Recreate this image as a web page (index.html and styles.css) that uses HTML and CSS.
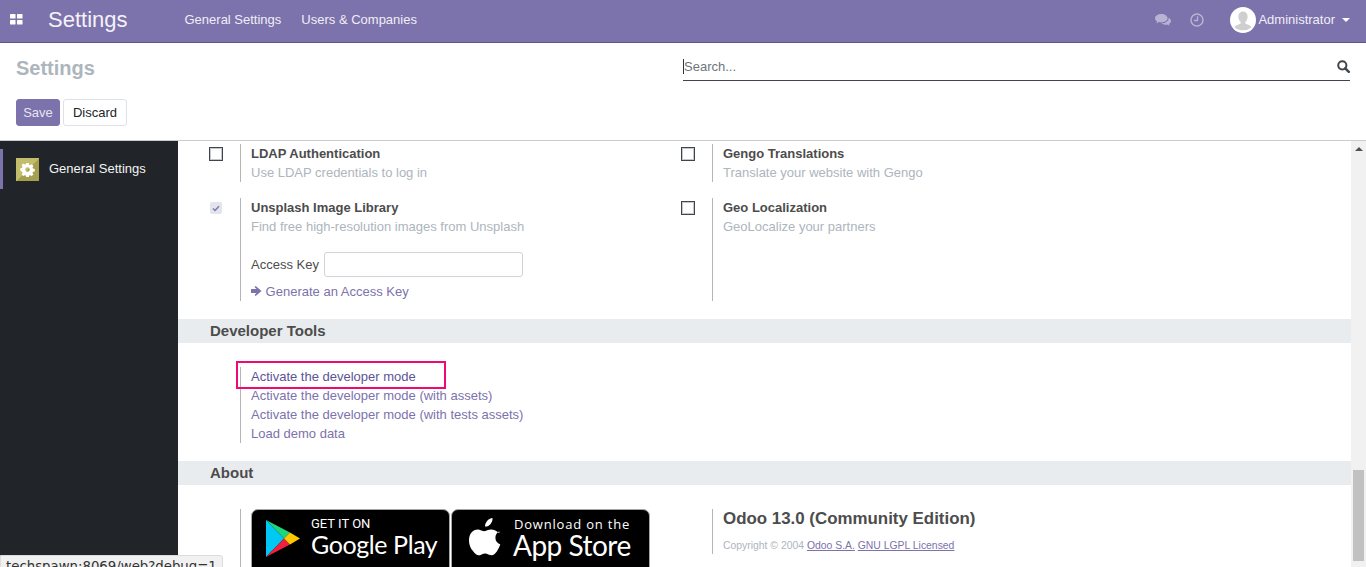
FILE: index.html
```html
<!DOCTYPE html>
<html lang="en">
<head>
    <meta charset="UTF-8">
    <meta name="viewport" content="width=device-width, initial-scale=1.0">
    <title>Settings</title>
    <link rel="stylesheet" href="styles.css">
</head>
<body>
    <header class="navbar">
        <svg class="apps-icon" width="13" height="11" viewBox="0 0 13 11"><rect width="5.5" height="4.5" rx="0.6"/><rect x="7" width="5.5" height="4.5" rx="0.6"/><rect y="6" width="5.5" height="4.5" rx="0.6"/><rect x="7" y="6" width="5.5" height="4.5" rx="0.6"/></svg>
        <span class="brand">Settings</span>
        <a class="nav-link">General Settings</a>
        <a class="nav-link">Users &amp; Companies</a>
        <div class="systray">
            <svg class="tray-icon" width="16" height="14" viewBox="0 0 16 14"><path d="M6.3 0C2.8 0 0 1.9 0 4.3c0 1.300.8 2.500 2.200 3.300-.2.600-.5 1.100-1 1.600 1.100-.1 2-.5 2.800-1.100.7.200 1.500.3 2.300.3 3.500 0 6.300-1.900 6.300-4.100S9.800 0 6.300 0z"/><path d="M13.600 3.400c.1.300.1.600.1.900 0 2.900-3.200 5-7 5h-.5c1 .9 2.500 1.400 4.200 1.400.6 0 1.200-.1 1.800-.2.700.6 1.500 1 2.500 1.100-.4-.5-.7-1-.9-1.500C15.100 9.400 16 8.300 16 7c0-1.500-1-2.800-2.400-3.600z"/></svg>
            <svg class="tray-icon clock" width="14" height="14" viewBox="0 0 14 14"><circle cx="7" cy="7" r="6" fill="none" stroke="currentColor" stroke-width="1.500"/><path d="M7.500 3.200v4.300H4" fill="none" stroke="currentColor" stroke-width="1.300"/></svg>
            <span class="avatar">
                <svg width="26" height="26" viewBox="0 0 26 26"><circle cx="13" cy="13" r="13" fill="#fff"/><path d="M13 4.500c-3 0-4.600 2.300-4.600 5.200 0 2.200.9 4.200 2.300 5.300v1.600c-2 1-5.200 1.700-6.200 3.600A13 13 0 0 0 21.500 20.200c-1-1.900-4.200-2.600-6.200-3.600V15c1.400-1.100 2.300-3.100 2.300-5.300 0-2.900-1.600-5.200-4.600-5.200z" fill="#cfcfcf"/></svg>
            </span>
            <span class="user-name">Administrator</span>
            <span class="caret"></span>
        </div>
    </header>

    <section class="control-panel">
        <h1 class="breadcrumb">Settings</h1>
        <div class="search">
            <span class="search-caret"></span>
            <span class="search-text">Search...</span>
            <svg class="search-icon" width="13" height="13" viewBox="0 0 13 13"><circle cx="5.300" cy="5.300" r="4.100" fill="none" stroke="#3f454c" stroke-width="2"/><path d="M8.300 8.300l3.500 3.500" stroke="#3f454c" stroke-width="2.400" stroke-linecap="round"/></svg>
        </div>
        <div class="buttons">
            <button class="btn btn-primary">Save</button>
            <button class="btn btn-secondary">Discard</button>
        </div>
    </section>

    <div class="workspace">
        <aside class="sidebar">
            <div class="side-item">
                <span class="side-tile">
                    <svg width="15" height="15" viewBox="0 0 16 16"><path fill="#fff" fill-rule="evenodd" d="M6.700 1h2.600l.4 1.900 1.200.5 1.600-1 1.800 1.800-1 1.600.5 1.200 1.900.4v2.600l-1.900.4-.5 1.200 1 1.600-1.800 1.800-1.600-1-1.200.5-.4 1.900H6.700l-.4-1.900-1.200-.5-1.600 1-1.800-1.800 1-1.600-.5-1.200L.3 9.300V6.700l1.900-.4.500-1.200-1-1.600 1.800-1.800 1.600 1 1.200-.5zM8 5.600a2.400 2.400 0 1 0 0 4.800 2.400 2.400 0 0 0 0-4.800z"/></svg>
                </span>
                <span class="side-label">General Settings</span>
            </div>
        </aside>

        <main class="content">
            <div class="settings-grid first">
                <div class="setting">
                    <span class="checkbox"></span>
                    <div class="setting-body">
                        <div class="setting-title">LDAP Authentication</div>
                        <div class="setting-help">Use LDAP credentials to log in</div>
                    </div>
                </div>
                <div class="setting">
                    <span class="checkbox"></span>
                    <div class="setting-body">
                        <div class="setting-title">Gengo Translations</div>
                        <div class="setting-help">Translate your website with Gengo</div>
                    </div>
                </div>
                <div class="setting">
                    <span class="checkbox checked">
                        <svg width="8" height="7" viewBox="0 0 8 7"><path d="M1 3.500l2 2 4-4.300" fill="none" stroke="#7c7bad" stroke-width="1.500"/></svg>
                    </span>
                    <div class="setting-body">
                        <div class="setting-title">Unsplash Image Library</div>
                        <div class="setting-help">Find free high-resolution images from Unsplash</div>
                        <div class="key-row">
                            <label class="key-label">Access Key</label>
                            <span class="key-input"></span>
                        </div>
                        <a class="link key-link">
                            <svg width="11" height="10" viewBox="0 0 11 10"><path d="M0 3h5.500L3.500 1 4.700 0l5.800 5-5.800 5-1.200-1 2-2H0z" fill="#7c72ac"/></svg>
                            Generate an Access Key
                        </a>
                    </div>
                </div>
                <div class="setting">
                    <span class="checkbox"></span>
                    <div class="setting-body">
                        <div class="setting-title">Geo Localization</div>
                        <div class="setting-help">GeoLocalize your partners</div>
                    </div>
                </div>
            </div>

            <h2 class="section-head dev-head">Developer Tools</h2>
            <div class="dev-links">
                <a class="link dev-link">Activate the developer mode
                    <span class="highlight"></span>
                </a>
                <a class="link">Activate the developer mode (with assets)</a>
                <a class="link">Activate the developer mode (with tests assets)</a>
                <a class="link">Load demo data</a>
            </div>

            <h2 class="section-head">About</h2>
            <div class="about">
                <div class="about-left">
                    <div class="badge">
                        <svg class="play-logo" width="36" height="39" viewBox="0 0 36 39">
                            <path d="M1 1v37l18-18.500z" fill="#00c8f5"/>
                            <path d="M1 1l18 18.500 6-6z" fill="#20d67b"/>
                            <path d="M1 38l18-18.500 6 6z" fill="#f0213f"/>
                            <path d="M25 13.500l10 6-10 6-6-6z" fill="#ffc800"/>
                        </svg>
                        <div class="badge-text">
                            <span class="play-small">GET IT ON</span>
                            <span class="play-big">Google Play</span>
                        </div>
                    </div>
                    <div class="badge apple-badge">
                        <svg class="apple-logo" width="32" height="39" viewBox="0 0 32 39"><path fill="#fff" d="M23.500 0c.2 2.200-.6 4.300-1.900 5.900-1.300 1.600-3.400 2.800-5.500 2.700-.3-2.100.8-4.300 2-5.700C19.400 1.300 21.600.2 23.500 0zM30.300 13.300c-2.600 1.600-3.900 3.700-3.900 6.400 0 3.100 1.700 5.400 4.900 6.900-.8 2.500-2 4.800-3.500 6.900-1.700 2.400-3.300 3.700-5.200 3.700-1 0-2-.3-3.200-.8-1.100-.5-2.200-.8-3.300-.8-1.200 0-2.300.3-3.500.8-1.200.6-2.200.9-3 .9-2 0-3.800-1.500-5.600-4.200C1.200 29.800 0 25.900 0 22.400c0-3.200.8-5.800 2.500-7.800 1.600-2 3.800-3 6.300-3 1.100 0 2.200.3 3.500.8 1.400.5 2.300.8 2.800.8.600 0 1.600-.3 3.100-.9 1.400-.5 2.600-.8 3.700-.8 3.200 0 5.900 1.300 8.400 3.800z"/></svg>
                        <div class="badge-text">
                            <span class="apple-small">Download on the</span>
                            <span class="apple-big">App Store</span>
                        </div>
                    </div>
                </div>
                <div class="about-right">
                    <div class="version">Odoo 13.0 (Community Edition)</div>
                    <div class="copyright">Copyright © 2004 <a class="link-under">Odoo S.A.</a> <a class="link-under">GNU LGPL Licensed</a></div>
                </div>
            </div>
        </main>

        <div class="scrollbar">
            <span class="scroll-up"></span>
            <span class="scroll-thumb"></span>
        </div>
    </div>

    <div class="status-tip">techspawn:8069/web?debug=1</div>
</body>
</html>
```

FILE: styles.css
```css
html, body { height: 100%; }
body { margin: 0; overflow: hidden; font-family: "Liberation Sans", Arial, sans-serif; font-size: 13px; color: #4c4c4c; background: #fff; display: flex; flex-direction: column; position: relative; }
a { text-decoration: none; }

/* top bar */
.navbar { flex: none; height: 40px; padding-bottom: 2px; background: #7c72ac; border-bottom: 1px solid #5f5590; display: flex; align-items: center; color: #fff; }
.apps-icon { fill: #fff; margin-left: 10px; margin-top: -1px; }
.brand { font-size: 22px; margin-left: 25px; margin-right: 57px; color: #f4f3f8; }
.nav-link { color: #f0eef6; margin-right: 20px; margin-top: -2px; }
.systray { margin-left: auto; display: flex; align-items: center; padding-right: 16px; }
.tray-icon { fill: #b9b3d3; color: #b9b3d3; margin-right: 19px; margin-top: 2px; }
.tray-icon.clock { margin-right: 26px; margin-top: 0; }
.avatar { width: 26px; height: 26px; margin-right: 2px; }
.user-name { color: #f0eef6; margin-top: -2px; }
.caret { width: 0; height: 0; border: 4px solid transparent; border-top-color: #fff; border-bottom: 0; margin-left: 7px; margin-top: -1px; }

/* control panel */
.control-panel { flex: none; height: 98px; box-sizing: border-box; padding: 13px 16px 0; border-bottom: 1px solid #ccc; display: grid; grid-template-columns: 1fr 1fr; grid-template-rows: 25px 27px; row-gap: 18px; }
.breadcrumb { margin: 0; font-size: 20px; line-height: 25px; font-weight: bold; color: #adb5bd; }
.search { display: flex; align-items: center; border-bottom: 1px solid #3f454c; padding-bottom: 4px; }
.search-caret { width: 1px; height: 15px; background: #333; }
.search-text { color: #6c757d; }
.search-icon { margin-left: auto; }
.buttons { display: flex; gap: 3px; }
.btn { font-family: inherit; font-size: 13px; border-radius: 3px; padding: 0; height: 27px; }
.btn-primary { width: 44px; background: #7c72ac; border: 1px solid #7c72ac; color: #e8e6f1; }
.btn-secondary { width: 64px; background: #fff; border: 1px solid #dee2e6; color: #212529; }

/* body */
.workspace { flex: 1; display: flex; min-height: 0; }
.sidebar { flex: none; width: 178px; background: #212529; padding-top: 8px; color: #f3f3f3; }
.side-item { height: 40px; display: flex; align-items: center; gap: 10px; border-left: 3px solid #7c72ac; padding-left: 13px; }
.side-tile { width: 23px; height: 23px; display: flex; align-items: center; justify-content: center; background: linear-gradient(135deg, #c3bc6b 50%, #a5a050 50%); }
.side-label { margin-top: -2px; }
.content { flex: 1; min-width: 0; overflow: hidden; }

.settings-grid { display: grid; grid-template-columns: 472px 472px; padding-left: 31px; row-gap: 16px; padding-top: 3px; }
.setting { display: flex; }
.checkbox { flex: none; width: 12px; height: 12px; border: 1px solid #3f454c; box-shadow: inset 0 0 0 1px #c4c6c9; margin-top: 3px; margin-right: 17px; }
.checkbox.checked { border-color: transparent; box-shadow: none; background: #e3e4ec; background-clip: padding-box; display: flex; align-items: center; justify-content: center; border-radius: 3px; }
.setting-body { border-left: 1px solid #b5b5b5; padding-left: 10px; }
.setting-title { font-weight: bold; line-height: 19px; }
.setting-help { color: #adb5bd; line-height: 19px; }
.key-row { display: flex; align-items: center; margin-top: 16px; }
.key-label { margin-right: 5px; }
.key-input { width: 197px; height: 23px; border: 1px solid #ced4da; border-radius: 3px; }
.link { color: #7c72ac; display: block; line-height: 19px; }
.key-link { margin-top: 5px; }

.section-head { margin: 0; height: 24px; line-height: 24px; background: #e9ecef; font-size: 15px; font-weight: bold; padding-left: 32px; color: #4c4c4c; }
.dev-head { margin-top: 18px; }
.dev-links { margin: 24px 0 0 62px; border-left: 1px solid #b5b5b5; padding-left: 10px; height: 76px; }
.dev-link { position: relative; color: #5c5496; }
.highlight { position: absolute; left: -15px; top: -6px; width: 206px; height: 24px; border: 2px solid #ee0a70; }
.dev-links + .section-head { margin-top: 18px; }

.about { display: grid; grid-template-columns: 472px 472px; padding-left: 62px; margin-top: 24px; }
.about-left { display: flex; gap: 1px; border-left: 1px solid #b5b5b5; padding-left: 10px; width: 411px; height: 70px; }
.about-right { border-left: 1px solid #b5b5b5; padding-left: 10px; height: 45px; }
.version { font-size: 16.900px; font-weight: bold; line-height: 19px; }
.copyright { font-size: 10.400px; color: #adb5bd; margin-top: 10px; line-height: 16px; }
.link-under { color: #7c72ac; text-decoration: underline; }

.badge { flex: none; box-sizing: border-box; width: 199px; height: 70px; background: #000; border: 1px solid #a6a6a6; border-radius: 7px; color: #fff; display: flex; padding: 9px 0 0 13px; align-items: flex-start; }
.apple-badge { padding: 12px 0 0 17px; }
.badge-text { display: flex; flex-direction: column; white-space: nowrap; }
.play-logo { margin-right: 10px; }
.play-small { font-family: Roboto, sans-serif; font-size: 13px; line-height: 13px; margin-top: -2px; }
.play-big { font-family: Lato, sans-serif; font-size: 25px; line-height: 28px; letter-spacing: -0.4px; }
.apple-logo { margin-right: 13px; margin-top: -4px; }
.apple-small { font-family: "Open Sans", sans-serif; font-size: 13px; line-height: 14px; letter-spacing: 0.8px; margin-top: -5px; }
.apple-big { font-family: Lato, sans-serif; font-size: 28px; line-height: 28px; letter-spacing: -0.5px; margin-left: -1px; }

/* drawn scrollbar */
.scrollbar { flex: none; width: 15px; background: #f1f1f1; display: flex; flex-direction: column; align-items: center; }
.scroll-up { width: 0; height: 0; border: 4px solid transparent; border-bottom: 4px solid #505050; border-top: 0; margin-top: 6px; }
.scroll-thumb { width: 11px; height: 91px; background: #c1c1c1; margin-top: 319px; }

.status-tip { position: absolute; left: 0; top: 555px; width: 216px; height: 24px; padding-left: 5px; background: #f1f1f1; border: 1px solid #dcdcdc; border-radius: 0 3px 0 0; font-family: "DejaVu Sans", sans-serif; font-size: 13.300px; color: #333; line-height: 21px; white-space: nowrap; }
```
